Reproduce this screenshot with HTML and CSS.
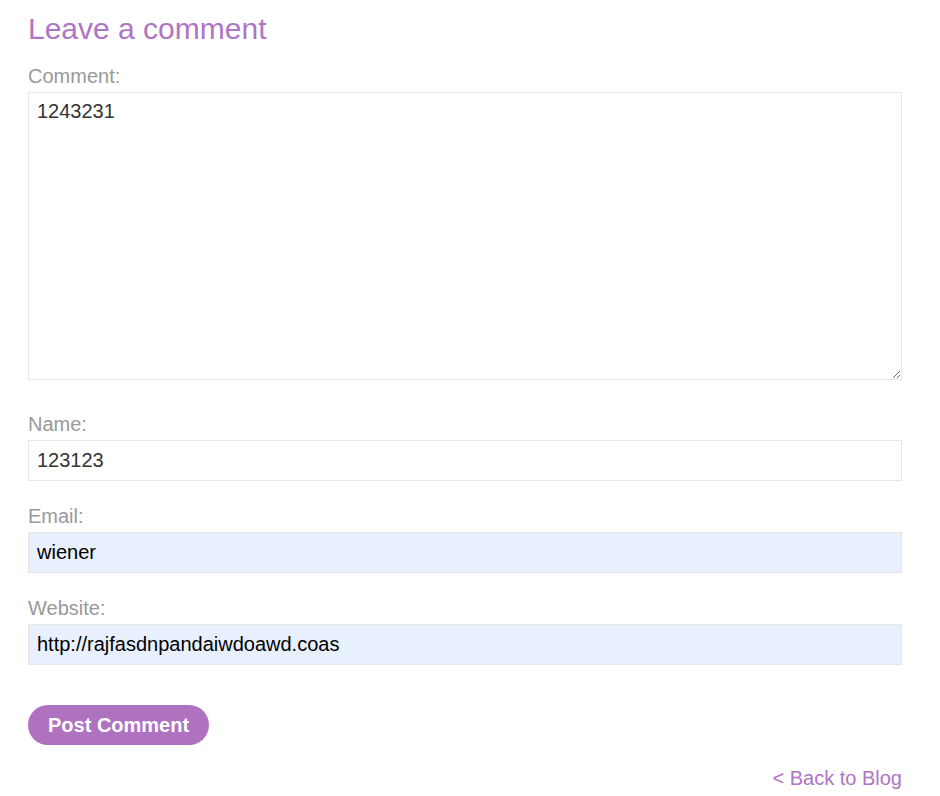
FILE: index.html
```html
<!DOCTYPE html>
<html lang="en">
<head>
<meta charset="utf-8">
<title>Leave a comment</title>
<link rel="stylesheet" href="styles.css">
</head>
<body>
<section class="comment-area">
  <h2 class="heading">Leave a comment</h2>
  <form class="comment-form">
    <label class="field-label" for="comment">Comment:</label>
    <textarea id="comment" class="field textarea">1243231</textarea>
    <label class="field-label" for="name">Name:</label>
    <input id="name" class="field" type="text" value="123123">
    <label class="field-label" for="email">Email:</label>
    <input id="email" class="field autofill" type="text" value="wiener">
    <label class="field-label" for="website">Website:</label>
    <input id="website" class="field autofill" type="text" value="http://rajfasdnpandaiwdoawd.coas">
    <button class="button" type="button">Post Comment</button>
  </form>
  <div class="back-row">
    <a class="back-link" href="#">&lt; Back to Blog</a>
  </div>
</section>
</body>
</html>
```

FILE: styles.css
```css
html, body {
  margin: 0;
  padding: 0;
  background: #ffffff;
}

body {
  font-family: "Liberation Sans", Arial, sans-serif;
  font-size: 20px;
  color: #333333;
}

.comment-area {
  padding: 11px 38px 0 28px;
}

.heading {
  margin: 0 0 17px 0;
  font-size: 30px;
  line-height: 36px;
  font-weight: normal;
  color: #ae75c5;
}

.comment-form {
  display: flex;
  flex-direction: column;
  align-items: flex-start;
}

.field-label {
  display: block;
  line-height: 24px;
  color: #999999;
  margin-bottom: 4px;
}

.field {
  box-sizing: border-box;
  width: 100%;
  height: 41px;
  margin: 0 0 23px 0;
  padding: 0 8px;
  border: 1px solid #e6e6e6;
  background: #ffffff;
  font-family: "Liberation Sans", Arial, sans-serif;
  font-size: 20px;
  line-height: 24px;
  color: #333333;
  outline: none;
}

.textarea {
  height: 288px;
  padding: 6px 8px;
  margin-bottom: 32px;
  resize: vertical;
}

.autofill {
  background: #e8f0fe;
  color: #000000;
}

.button {
  margin-top: 17px;
  height: 40px;
  padding: 0 20px;
  border: none;
  border-radius: 20px;
  background: #ae72c0;
  color: #ffffff;
  font-family: "Liberation Sans", Arial, sans-serif;
  font-size: 20px;
  font-weight: bold;
  cursor: pointer;
}

.back-row {
  display: flex;
  justify-content: flex-end;
  margin-top: 21px;
}

.back-link {
  line-height: 24px;
  color: #ae75c5;
  text-decoration: none;
}
```
